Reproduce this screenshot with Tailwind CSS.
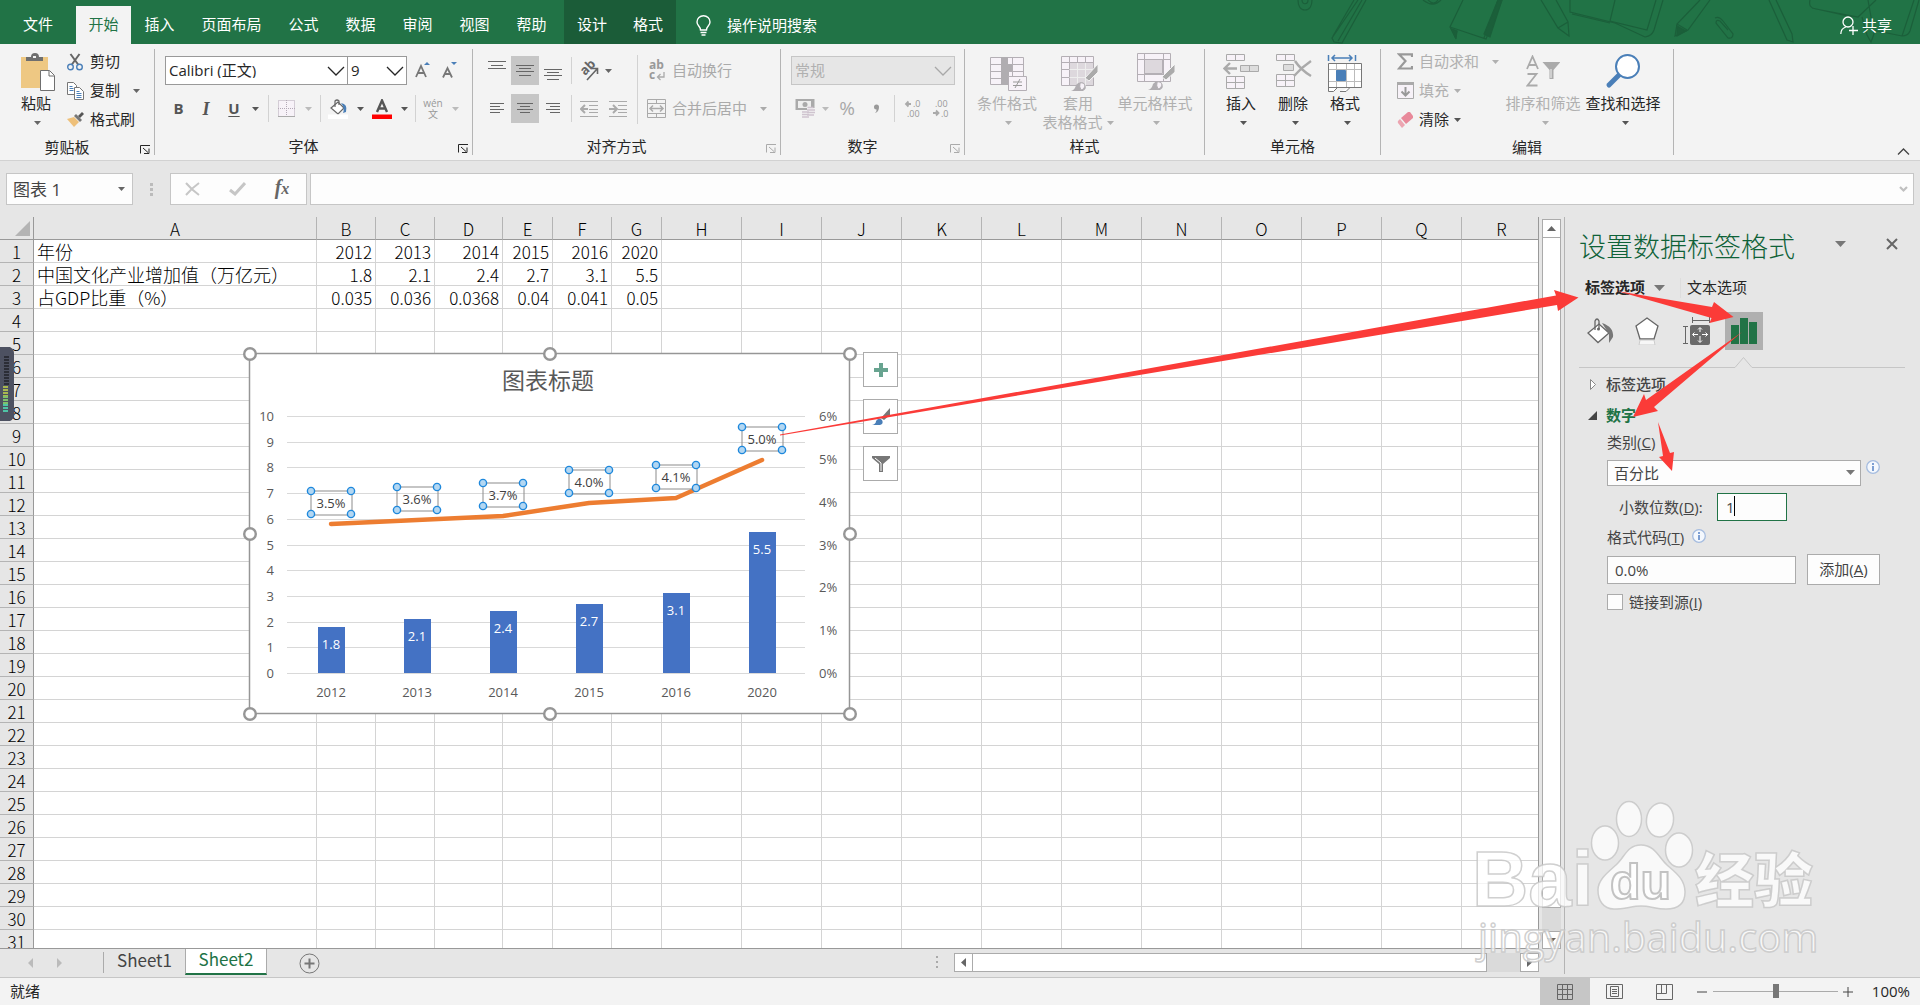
<!DOCTYPE html>
<html lang="zh-CN">
<head>
  <meta charset="UTF-8" />
  <title>Excel - 图表 1</title>
  <script src="https://cdn.jsdelivr.net/npm/@tailwindcss/browser@4"></script>
</head>
<body class="h-screen flex flex-col overflow-hidden relative bg-[#e6e6e6] text-[#262626] text-[15px] leading-none font-['Open_Sans','Noto_Sans_CJK_SC',sans-serif]">

  <!-- shared symbols -->
  <svg class="hidden">
    <symbol id="caret" viewBox="0 0 7 4"><path d="M0 0h7L3.5 4z" fill="currentColor" /></symbol>
    <symbol id="chev" viewBox="0 0 18 10"><path d="M1 1l8 8 8-8" fill="none" stroke="currentColor" stroke-width="1.3" /></symbol>
    <symbol id="launch" viewBox="0 0 10 9"><path d="M.5 8.5V.5H10M3 3l5 4.5M9 3.5V8.5H4" fill="none" stroke="currentColor" /></symbol>
    <symbol id="info" viewBox="0 0 14 14"><circle cx="7" cy="7" r="6.3" fill="#f4f8fd" stroke="#a5bcdf" stroke-width="1.3" /><path d="M6 6h2v5H6zM6 3h2v2H6z" fill="#7d9fd3" /></symbol>
  </svg>

  <!-- tabs -->
  <header class="h-11 shrink-0 bg-[#217346] text-white flex items-stretch relative">
    <svg class="absolute right-0 top-0" width="640" height="44" viewBox="1280 0 640 44" fill="none" stroke="#1b5f3a" stroke-width="1.2">
      <path d="M1298 0c0 5 2 10 7 10s7-5 7-10M1302 0c0 5 6 5 6 0M1358 0l-26 38 2 4 8 1 24-43M1362 0l-24 41M1354 0l-21 36" />
      <path d="M1423 0q10 8 18 0M1428 0q6 6 10 0M1463 0l-13 27 36 12 16-39M1450 27l5 10 2-6M1484 38l14-38M1541 0l17 28 11 8-1-14-12-22M1558 28l10-6" />
      <path d="M1570 0v12l45 11 30 14q7-1 9-7l9-30M1572 14l38 9M1615 0l-5 21 37 9 9-30M1700 0l-23 24-2 12 13-6 22-30M1677 24l10 6M1715 18q4-2 8 3l10 13q0 5-5 4l-12-15q0-4 4-2l8 9M1769 0l18 40 6 2-1-8-16-34" />
      <path d="M1810 0q-2 8 6 9l42 8 18-17M1812 8l40 9M1862 17l5 18 4 7 3-8-6-34M1872 30l30 6q6 0 8-5l9-31M1902 36l12-36" />
      <path d="M1490 37l-6-3 14-34h4zM1452 29l5 2-1 8zM1677 26l9 5-9 5z" fill="#1b5f3a" />
    </svg>
    <nav class="flex items-end relative">
      <button class="w-[76px] h-[38px] pb-[2px]">文件</button>
      <button class="w-[55px] h-[38px] pb-[2px] bg-[#f3f3f3] text-[#217346]">开始</button>
      <button class="w-[57px] h-[38px] pb-[2px]">插入</button>
      <button class="w-[87px] h-[38px] pb-[2px]">页面布局</button>
      <button class="w-[57px] h-[38px] pb-[2px]">公式</button>
      <button class="w-[57px] h-[38px] pb-[2px]">数据</button>
      <button class="w-[57px] h-[38px] pb-[2px]">审阅</button>
      <button class="w-[57px] h-[38px] pb-[2px]">视图</button>
      <button class="w-[57px] h-[38px] pb-[2px]">帮助</button>
      <div class="h-11 ml-1 bg-[#1b5c38] flex items-end">
        <button class="w-14 h-[38px] pb-[2px]">设计</button>
        <button class="w-14 h-[38px] pb-[2px]">格式</button>
      </div>
      <button class="h-[38px] ml-5 flex items-center gap-4">
        <svg width="15" height="21" viewBox="0 0 15 21" fill="none" stroke="#fff" stroke-width="1.4"><path d="M4.5 15c0-4-3.500-4-3.500-8a6.500 6.300 0 0 1 13 0c0 4-3.500 4-3.500 8zM4.500 17.500h6M5.500 20h4" /></svg>
        操作说明搜索
      </button>
    </nav>
    <button class="relative ml-auto mr-[28px] pt-[6px] flex items-center gap-[4px]">
      <svg width="18" height="19" viewBox="0 0 18 19" fill="none" stroke="#fff" stroke-width="1.3"><circle cx="8" cy="6" r="5" /><path d="M.8 18c0-4 2-6 5-7M13 10v9M9 14.500h9" /></svg>
      共享
    </button>
  </header>

  <!-- ribbon -->
  <section class="h-[117px] shrink-0 bg-[#f3f3f3] border-b border-[#d2d2d2] flex relative">
    <!-- clipboard -->
    <div class="w-[154px] pt-[3px] flex flex-col">
      <div class="h-[87px] flex">
        <button class="w-[52px] ml-[10px] flex flex-col items-center">
          <span class="h-[47px] pt-[6px] pl-1"><svg width="34" height="38" viewBox="0 0 34 38"><path d="M0 4h27v31H0z" fill="#eec883" /><path d="M5 8V4h5q0-4 4-4t4 4h4v4z" fill="#6f6f6f" /><path d="M12 3h3v2h-3z" fill="#f3f3f3" /><path d="M19.500 17.500h9l5 5v15h-14z" fill="#fff" stroke="#6f6f6f" /><path d="M28 18v5h5" fill="none" stroke="#6f6f6f" /></svg></span>
          <span class="h-[19px] leading-[18px]">粘贴</span>
          <span class="h-[19px] pt-[8px] pl-[3px] text-[#666]"><svg width="7" height="4"><use href="#caret" /></svg></span>
        </button>
        <div class="ml-[5px] flex flex-col">
          <button class="h-[29px] flex items-center gap-[7px]"><svg width="16" height="18" viewBox="0 0 16 18" fill="none"><path d="M3.500 1l8 11M12.500 1l-8 11" stroke="#666" stroke-width="2" /><circle cx="3.500" cy="14" r="2.800" stroke="#4a7fb8" stroke-width="1.400" /><circle cx="12.500" cy="14" r="2.800" stroke="#4a7fb8" stroke-width="1.400" /></svg>剪切</button>
          <button class="h-[29px] flex items-center gap-[7px]"><svg width="17" height="18" viewBox="0 0 17 18" fill="#fff" stroke="#777"><path d="M.5.500h6l3 3v9h-9z" /><path d="M7.500 5.500h5l4 4v8h-9z" /><path d="M2.500 4.500h3M2.500 6.500h4M2.500 8.500h4M9.500 9.500h3M9.500 11.500h5M9.500 13.500h5M9.500 15.500h5" stroke="#4a7fb8" /></svg><span class="-ml-px">复制</span><svg class="ml-[6px] text-[#666]" width="7" height="4"><use href="#caret" /></svg></button>
          <button class="h-[29px] flex items-center gap-[6px]"><svg width="17" height="15" viewBox="0 0 17 15"><path d="M0 7l7-2 5 5-5 5z" fill="#eec07a" /><path d="M7 4l2-2 6 6-2 2z" fill="#777" /><path d="M11 4l4-4 2 2-4 4z" fill="#555" /></svg>格式刷</button>
        </div>
      </div>
      <div class="h-[28px] flex items-center"><span class="flex-1 text-center">剪贴板</span><button class="w-5 pl-[6px]" aria-label="剪贴板选项"><svg class="mt-1" width="10" height="9"><use href="#launch" /></svg></button></div>
    </div>
    <div class="w-px my-[5px] bg-[#b4b4b4]"></div>

    <!-- font -->
    <div class="w-[317px] pt-[3px] flex flex-col">
      <div class="h-[87px] pl-[10px] flex flex-col justify-center text-[#555]">
        <div class="h-[38px] flex items-center">
          <div class="relative w-[183px] text-[#262626]">
            <select aria-label="字体" class="appearance-none w-full h-[29px] bg-white border border-[#999] px-[3px]"><option>Calibri (正文)</option></select>
            <svg class="absolute right-[3px] top-[10px] pointer-events-none" width="18" height="10"><use href="#chev" /></svg>
          </div>
          <div class="relative w-[60px] -ml-px text-[#262626]">
            <select aria-label="字号" class="appearance-none w-full h-[29px] bg-white border border-[#999] px-[3px]"><option>9</option></select>
            <svg class="absolute right-[3px] top-[10px] pointer-events-none" width="18" height="10"><use href="#chev" /></svg>
          </div>
          <button class="ml-[8px] w-[16px]" aria-label="增大字号"><svg width="16" height="17" viewBox="0 0 16 17"><path d="M1 15L6 4l5 11M3 11h6" fill="none" stroke="#777" stroke-width="1.800" /><path d="M9 3l3-3 3 3z" fill="#4a7fb8" /></svg></button>
          <button class="ml-[11px] w-[16px]" aria-label="减小字号"><svg width="16" height="17" viewBox="0 0 16 17"><path d="M1 15.500L5.500 6l4.500 9.500M3 12h5" fill="none" stroke="#777" stroke-width="1.800" /><path d="M9 0l3 3 3-3z" fill="#4a7fb8" /></svg></button>
        </div>
        <div class="h-[38px] flex items-center">
          <button class="w-[27px] font-bold">B</button>
          <button class="w-[28px] font-bold italic font-['Liberation_Serif',serif] text-lg leading-none">I</button>
          <button class="w-[28px] font-bold underline underline-offset-2">U</button>
          <button class="w-[14px]" aria-label="下划线"><svg class="mx-auto" width="7" height="4"><use href="#caret" /></svg></button>
          <div class="w-px h-[27px] ml-[6px] bg-[#d2d2d2]"></div>
          <button class="w-[34px]" aria-label="边框"><svg class="mx-auto" width="17" height="17" viewBox="0 0 17 17" fill="#f7f2f8" stroke="#b3a9b6"><path d="M.5.500h16v16H.5zM8.500 0v17M0 8.500h17" stroke-dasharray="1 1" /><path d="M0 16.500h17" stroke="#aaa" /></svg></button>
          <button class="w-[10px] text-[#bbb]" aria-label="边框选项"><svg class="mx-auto" width="7" height="4"><use href="#caret" /></svg></button>
          <div class="w-px h-[27px] ml-[7px] bg-[#d2d2d2]"></div>
          <button class="w-[34px]" aria-label="填充颜色"><svg class="mx-auto" width="20" height="20" viewBox="0 0 20 20"><path d="M3 9l7-6 6 6-6 6z" fill="#fff" stroke="#666" stroke-width="1.200" /><path d="M7 8V2q2-2 4 0v4" fill="none" stroke="#666" stroke-width="1.200" /><path d="M13 4q7 1 5 9l-3 1q2-5-2-10z" fill="#4a7fb8" /><path d="M0 15.500h20V20H0z" fill="#fff" /></svg></button>
          <button class="w-[10px]" aria-label="填充选项"><svg class="mx-auto" width="7" height="4"><use href="#caret" /></svg></button>
          <button class="w-[34px]" aria-label="字体颜色"><svg class="mx-auto" width="20" height="20" viewBox="0 0 20 20"><path d="M5 13L10 1.500l5 11.500M6.500 9.500h7" fill="none" stroke="#555" stroke-width="2.400" /><path d="M0 15.500h20V20H0z" fill="#f00" /></svg></button>
          <button class="w-[10px]" aria-label="字体颜色选项"><svg class="mx-auto" width="7" height="4"><use href="#caret" /></svg></button>
          <div class="w-px h-[27px] ml-[6px] bg-[#d2d2d2]"></div>
          <button class="w-[34px] flex flex-col items-center text-[#999] text-[10px]"><span class="h-[10px] leading-[8px]">wén</span><span>文</span></button>
          <button class="w-[10px] text-[#bbb]" aria-label="拼音选项"><svg class="mx-auto" width="7" height="4"><use href="#caret" /></svg></button>
        </div>
      </div>
      <div class="h-[28px] flex items-center"><span class="flex-1 text-center">字体</span><button class="w-5 pl-[6px]" aria-label="字体选项"><svg class="mt-1" width="10" height="9"><use href="#launch" /></svg></button></div>
    </div>
    <div class="w-px my-[5px] bg-[#b4b4b4]"></div>

    <!-- alignment -->
    <div class="w-[307px] pt-[3px] flex flex-col">
      <div class="h-[87px] pl-[10px] flex items-center text-[#666]">
        <div class="w-[154px]">
          <div class="h-[38px] flex items-center">
            <button class="w-[28px] h-[29px]" aria-label="顶端对齐"><svg class="mx-auto" width="18" height="20" viewBox="0 0 18 20" stroke="#666"><path d="M0 .5h18M3 4.500h12M0 7.500h18" /></svg></button>
            <button class="w-[28px] h-[29px] bg-[#c6c6c6]" aria-label="垂直居中"><svg class="mx-auto" width="18" height="20" viewBox="0 0 18 20" stroke="#666"><path d="M0 4.500h18M3 7.500h12M0 10.500h18M3 14.500h12" /></svg></button>
            <button class="w-[28px] h-[29px]" aria-label="底端对齐"><svg class="mx-auto" width="18" height="20" viewBox="0 0 18 20" stroke="#666"><path d="M0 8.500h18M3 11.500h12M0 14.500h18M3 18.500h12" /></svg></button>
            <div class="w-px h-[27px] ml-1 mr-[3px] bg-[#d2d2d2]"></div>
            <button class="w-[28px]" aria-label="方向"><svg class="mx-auto overflow-visible" width="20" height="20" viewBox="0 0 20 20"><text x="0" y="0" transform="translate(6 15) rotate(-45)" font-size="13" font-weight="bold" fill="#666">ab</text><path d="M8 19L18 8M13 7.500h5.500V13" fill="none" stroke="#666" stroke-width="1.600" /></svg></button>
            <button class="w-[10px]" aria-label="方向选项"><svg class="mx-auto" width="7" height="4"><use href="#caret" /></svg></button>
          </div>
          <div class="h-[38px] flex items-center">
            <button class="w-[28px] h-[29px]" aria-label="左对齐"><svg class="mx-auto" width="14" height="11" stroke="#666"><path d="M0 .5h14M0 3.500h10M0 6.500h14M0 9.500h10" /></svg></button>
            <button class="w-[28px] h-[29px] bg-[#c6c6c6]" aria-label="居中"><svg class="mx-auto" width="16" height="11" stroke="#666"><path d="M0 .5h16M3 3.500h10M0 6.500h16M3 9.500h10" /></svg></button>
            <button class="w-[28px] h-[29px]" aria-label="右对齐"><svg class="mx-auto" width="14" height="11" stroke="#666"><path d="M0 .5h14M4 3.500h10M0 6.500h14M4 9.500h10" /></svg></button>
            <div class="w-px h-[27px] ml-1 mr-[3px] bg-[#d2d2d2]"></div>
            <button class="w-[28px]" aria-label="减少缩进"><svg class="mx-auto" width="18" height="16" viewBox="0 0 18 16" fill="none" stroke="#aaa"><path d="M0 .5h18M9 4.500h9M9 8.500h9M9 11.500h9M0 15.500h18" /><path d="M8 8H1M5 4L1 8l4 4" stroke-width="2" /></svg></button>
            <button class="w-[29px]" aria-label="增加缩进"><svg class="mx-auto" width="18" height="16" viewBox="0 0 18 16" fill="none" stroke="#aaa"><path d="M0 .5h18M9 4.500h9M9 8.500h9M9 11.500h9M0 15.500h18" /><path d="M0 8h7M4 4l4 4-4 4" stroke-width="2" /></svg></button>
          </div>
        </div>
        <div class="w-px h-[69px] bg-[#d2d2d2]"></div>
        <div class="ml-[9px] text-[#aaa]">
          <button class="h-[38px] flex items-center gap-[6px]"><svg class="overflow-visible" width="19" height="20" viewBox="0 0 19 20" fill="#999" font-size="12" font-weight="bold"><text x="2" y="8">ab</text><text x="2" y="18">c</text><path d="M17 11v5h-6M13.500 13l-3 3 3 3" fill="none" stroke="#aaa" stroke-width="1.300" /></svg>自动换行</button>
          <button class="h-[38px] flex items-center gap-[6px]"><svg width="19" height="19" viewBox="0 0 19 19" fill="none" stroke="#aaa"><path d="M.5.500h18v18H.5zM.5 4.500h18M.5 14.500h18M9.500.500v4M9.500 14.500v4" /><path d="M3 9.500h13M6 6.500l-3 3 3 3M13 6.500l3 3-3 3" stroke-width="1.500" /></svg>合并后居中<svg class="ml-[7px]" width="7" height="4"><use href="#caret" /></svg></button>
        </div>
      </div>
      <div class="h-[28px] flex items-center"><span class="flex-1 text-center">对齐方式</span><button class="w-5 pl-[6px] text-[#aaa]" aria-label="对齐选项"><svg class="mt-1" width="10" height="9"><use href="#launch" /></svg></button></div>
    </div>
    <div class="w-px my-[5px] bg-[#b4b4b4]"></div>

    <!-- number -->
    <div class="w-[183px] pt-[3px] flex flex-col">
      <div class="h-[87px] flex flex-col justify-center text-[#a8a8a8]">
        <div class="h-[38px] pl-[10px] flex items-center">
          <div class="relative w-[164px]">
            <select aria-label="数字格式" disabled class="appearance-none w-full h-[29px] bg-[#e6e6e6] border border-[#c6c6c6] px-[3px] text-[#b0b0b0] opacity-100"><option>常规</option></select>
            <svg class="absolute right-[3px] top-[10px] pointer-events-none" width="18" height="10"><use href="#chev" /></svg>
          </div>
        </div>
        <div class="h-[38px] pl-[9px] flex items-center">
          <button class="w-[30px]" aria-label="会计格式"><svg class="mx-auto" width="20" height="19" viewBox="0 0 20 19"><path d="M.5 0h19v11H.5z" fill="#aaa" /><path d="M3 2h13v7H3z" fill="#eee" /><circle cx="10" cy="5.500" r="2.500" fill="#aaa" /><path d="M12 9h8v8h-8zM7 13h7v6H7z" fill="#f3f3f3" /><path d="M12.500 8.500h6M12 11h8M12 13.500h8M12 16h7M7 13h7M7 15.500h7M7 18h7" stroke="#cfc4cf" stroke-width="1.300" /></svg></button>
          <button class="w-[10px] text-[#bbb]" aria-label="会计格式选项"><svg class="mx-auto" width="7" height="4"><use href="#caret" /></svg></button>
          <button class="w-[34px] text-[19px]">%</button>
          <button class="w-[24px]" aria-label="千位分隔"><svg class="mx-auto" width="7" height="10"><path d="M1 3a2.500 2.500 0 1 1 5 0q0 5-4 6q2-2 1.500-3.500Q1 5.500 1 3z" fill="#999" /></svg></button>
          <div class="w-px h-[27px] ml-[6px] bg-[#d2d2d2]"></div>
          <button class="w-[36px]" aria-label="增加小数位"><svg class="mx-auto overflow-visible" width="18" height="18" viewBox="0 0 18 18" fill="#999" font-size="9"><text x="9" y="7">.0</text><text x="3" y="17">.00</text><path d="M7 4H2M4.500 1.500L2 4l2.500 2.500" fill="none" stroke="#aaa" stroke-width="1.800" /></svg></button>
          <button class="w-[20px]" aria-label="减少小数位"><svg class="mx-auto overflow-visible" width="18" height="18" viewBox="0 0 18 18" fill="#999" font-size="9"><text x="3" y="7">.00</text><text x="9" y="17">.0</text><path d="M1 13h5M4 10.500L6.500 13 4 15.500" fill="none" stroke="#aaa" stroke-width="1.800" /></svg></button>
        </div>
      </div>
      <div class="h-[28px] flex items-center"><span class="flex-1 text-center">数字</span><button class="w-5 pl-[6px] text-[#aaa]" aria-label="数字选项"><svg class="mt-1" width="10" height="9"><use href="#launch" /></svg></button></div>
    </div>
    <div class="w-px my-[5px] bg-[#b4b4b4]"></div>

    <!-- styles -->
    <div class="w-[239px] pt-[3px] flex flex-col">
      <div class="h-[87px] pl-2 flex text-[#b0b0b0] whitespace-nowrap">
        <button class="w-[68px] flex flex-col items-center">
          <span class="h-[47px] pt-[10px] pl-[2px]"><svg width="37" height="36" viewBox="0 0 37 36"><path d="M.5.500h33v27H.5zM0 7.500h34M0 14.500h34M0 21.500h34M11.500 0v28M22.500 0v28" fill="#f7f2f8" stroke="#b4afb5" /><path d="M11 0h7v7h-7zM11 7h11v7H11zM11 14h8v7h-8zM11 21h7v7h-7z" fill="#b0adb1" /><path d="M18.500 19.500h18v14h-18z" fill="#f7f2f8" stroke="#b4afb5" /><path d="M23 25h9M23 28.500h9M30 22l-5 9" stroke="#999" fill="none" /></svg></span>
          <span class="h-[19px] leading-[18px]">条件格式</span>
          <span class="h-[19px] pt-[8px] pl-[3px]"><svg width="7" height="4"><use href="#caret" /></svg></span>
        </button>
        <button class="w-[74px] flex flex-col items-center">
          <span class="h-[47px] pt-[9px] pl-[3px]"><svg width="38" height="37" viewBox="0 0 38 37"><path d="M.5.500h32v29H.5zM0 6.500h33M0 13.500h33M0 21.500h33M8.500 0v30M16.500 0v30M24.500 0v30" fill="#f7f2f8" stroke="#b4afb5" /><path d="M8.500 6.500h24v23h-24z" fill="#ddd8dd" stroke="#b4afb5" /><path d="M8.500 13.500h24M8.500 21.500h24M16.500 7v23M24.500 7v23" stroke="#eee" /><path d="M37 8v8l-9 9-4-3z" fill="#aaa" stroke="#f3f3f3" /><path d="M10 35q4-1 5-6 3-4 8-2 4 5-1 8z" fill="#b0adb1" /><path d="M19 27q4-1 5 3-1 4-4 4-2-3-1-7z" fill="#f7f2f8" stroke="#b0adb1" /></svg></span>
          <span class="h-[19px] leading-[18px]">套用</span>
          <span class="h-[19px] leading-[19px] flex items-center gap-1">表格格式<svg width="7" height="4"><use href="#caret" /></svg></span>
        </button>
        <button class="w-[80px] flex flex-col items-center">
          <span class="h-[47px] pt-[6px] pl-[2px]"><svg width="38" height="39" viewBox="0 0 38 39"><path d="M.5.500h33v28H.5zM0 6.500h34M0 21.500h34M7.500 0v28M26.500 0v28" fill="#f7f2f8" stroke="#b4afb5" /><path d="M7.500 6.500h18v14h-18z" fill="#ddd8dd" stroke="#b4afb5" /><path d="M38 11v8l-9 8-4-3z" fill="#aaa" stroke="#f3f3f3" /><path d="M11 37q4-1 5-6 3-4 8-2 4 5-1 8z" fill="#b0adb1" /><path d="M20 29q4-1 5 3-1 4-4 4-2-3-1-7z" fill="#f7f2f8" stroke="#b0adb1" /></svg></span>
          <span class="h-[19px] leading-[18px]">单元格样式</span>
          <span class="h-[19px] pt-[8px] pl-[3px]"><svg width="7" height="4"><use href="#caret" /></svg></span>
        </button>
      </div>
      <div class="h-[28px] flex items-center justify-center">样式</div>
    </div>
    <div class="w-px my-[5px] bg-[#b4b4b4]"></div>

    <!-- cells -->
    <div class="w-[175px] pt-[3px] flex flex-col">
      <div class="h-[87px] pl-[10px] flex">
        <button class="w-[52px] flex flex-col items-center">
          <span class="h-[47px] pt-[7px]"><svg width="36" height="36" viewBox="0 0 36 36" fill="#f7f2f8" stroke="#aaa"><path d="M3.500.500h18v6h-18zM12.500.500v6M3.500 22.500h18v12h-18zM12.500 22.500v12M3.500 28.500h18" /><path d="M17.500 11.500h18v6h-18zM26.500 11.500v6" fill="#ddd" /><path d="M14 14.500H2M7 9l-5.500 5.500L7 20" fill="none" stroke-width="2.400" /></svg></span>
          <span class="h-[19px] leading-[18px]">插入</span>
          <span class="h-[19px] pt-[8px] pl-[4px] text-[#555]"><svg width="7" height="4"><use href="#caret" /></svg></span>
        </button>
        <button class="w-[52px] flex flex-col items-center">
          <span class="h-[47px] pt-[7px] pl-[2px]"><svg width="36" height="36" viewBox="0 0 36 36" fill="#f7f2f8" stroke="#aaa"><path d="M.5.500h18v6H.5zM9.500.500v6M.5 20.500h18v12H.5zM9.500 20.500v12M.5 26.500h18" /><path d="M7.500 10.500h10v6h-10z" fill="#ddd" /><path d="M19 7q6 9 16 15M35 7q-9 6-17 15" fill="none" stroke-width="2.400" /></svg></span>
          <span class="h-[19px] leading-[18px]">删除</span>
          <span class="h-[19px] pt-[8px] pl-[4px] text-[#555]"><svg width="7" height="4"><use href="#caret" /></svg></span>
        </button>
        <button class="w-[52px] flex flex-col items-center">
          <span class="h-[47px] pt-[8px]"><svg class="overflow-visible" width="34" height="38" viewBox="0 0 34 38" fill="#fff" stroke="#777"><path d="M.5 8.500h33v24H.5z" /><path d="M8.500 9v24M18.500 9v24M26.500 9v24M1 14.500h32M1 26.500h32" stroke="#bbb" /><path d="M8.500 15.500h9v10h-9z" fill="#4a7fb8" stroke="#4a7fb8" /><path d="M.5 32v4.500h5l4-4M12 36.500h6l4-4M.5 32.500h33" /><path d="M.5 0v6M27.500 0v6M4 3h20M7 0L4 3l3 3M21 0l3 3-3 3" fill="none" stroke="#4a7fb8" stroke-width="1.500" /></svg></span>
          <span class="h-[19px] leading-[18px]">格式</span>
          <span class="h-[19px] pt-[8px] pl-[4px] text-[#555]"><svg width="7" height="4"><use href="#caret" /></svg></span>
        </button>
      </div>
      <div class="h-[28px] flex items-center justify-center">单元格</div>
    </div>
    <div class="w-px my-[5px] bg-[#b4b4b4]"></div>

    <!-- editing -->
    <div class="w-[292px] pt-[3px] flex flex-col">
      <div class="h-[87px] pl-4 flex">
        <div class="w-[106px] flex flex-col">
          <button class="h-[29px] flex items-center gap-[6px] text-[#b0b0b0]"><svg width="16" height="17" viewBox="0 0 16 17"><path d="M15 4V1.300H2L8.500 8 2 15.500h13V13" fill="none" stroke="#999" stroke-width="2.200" /></svg>自动求和<svg class="ml-[7px]" width="7" height="4"><use href="#caret" /></svg></button>
          <button class="h-[29px] flex items-center gap-[5px] text-[#b0b0b0]"><svg width="17" height="18" viewBox="0 0 17 18"><path d="M.5.500h16v16H.5z" fill="#f7f2f8" stroke="#aaa" /><path d="M0 0h17v3H0z" fill="#aaa" /><path d="M8.500 5v8M4.500 9.500l4 4 4-4" fill="none" stroke="#999" stroke-width="2" /></svg>填充<svg width="7" height="4"><use href="#caret" /></svg></button>
          <button class="h-[29px] flex items-center gap-[5px]"><svg width="17" height="16" viewBox="0 0 17 16"><path d="M4 6l7-6h2l3 4v2l-7 6z" fill="#e8899a" /><path d="M3 7l5 6-3 3-4-5q-.5-1 0-2z" fill="#eca5b1" /></svg>清除<svg class="text-[#555]" width="7" height="4"><use href="#caret" /></svg></button>
        </div>
        <button class="w-[80px] flex flex-col items-center text-[#b0b0b0]">
          <span class="h-[47px] pt-[8px]"><svg width="34" height="32" viewBox="0 0 34 32" fill="none" stroke="#aaa" stroke-width="1.800"><path d="M1 14L6.500 1.500 12 14M3 10h7M1.500 19h9L1.500 30.500h10" /><path d="M16.500 7h18l-7 8v9h-4v-9z" fill="#aaa" stroke="none" /><path d="M25 14v9" stroke="#f3f3f3" stroke-width="1" /></svg></span>
          <span class="h-[19px] leading-[18px]">排序和筛选</span>
          <span class="h-[19px] pt-[8px] pl-[4px]"><svg width="7" height="4"><use href="#caret" /></svg></span>
        </button>
        <button class="w-[80px] flex flex-col items-center">
          <span class="h-[47px] pt-[7px]"><svg width="36" height="36" viewBox="0 0 36 36"><path d="M15 20L4 31" stroke="#4a7fb8" stroke-width="5" stroke-linecap="round" /><circle cx="22.500" cy="12.500" r="11.500" fill="#fff" stroke="#4a7fb8" stroke-width="2" /></svg></span>
          <span class="h-[19px] leading-[18px]">查找和选择</span>
          <span class="h-[19px] pt-[8px] pl-[4px] text-[#555]"><svg width="7" height="4"><use href="#caret" /></svg></span>
        </button>
      </div>
      <div class="h-[28px] flex items-center justify-center">编辑</div>
    </div>
    <div class="w-px my-[5px] bg-[#b4b4b4]"></div>
    <button class="ml-auto self-end mr-[10px] mb-[5px]" aria-label="折叠功能区"><svg width="13" height="7"><path d="M1 6.500l5.500-5.500 5.500 5.500" fill="none" stroke="#444" stroke-width="1.300" /></svg></button>
  </section>

  <!-- formula bar -->
  <section class="shrink-0 py-3 px-[6px] flex items-stretch text-[#444]">
    <div class="relative w-[127px]">
      <select aria-label="名称框" class="appearance-none w-full h-8 bg-[#fdfdfd] border border-[#c6c6c6] px-[6px] text-[17px]"><option>图表 1</option></select>
      <svg class="absolute right-[8px] top-[14px] text-[#666] pointer-events-none" width="7" height="4"><use href="#caret" /></svg>
    </div>
    <div class="w-[37px] flex flex-col items-center justify-center gap-[2px]">
      <i class="size-[3px] bg-[#bbb]"></i><i class="size-[3px] bg-[#bbb]"></i><i class="size-[3px] bg-[#bbb]"></i>
    </div>
    <div class="w-[137px] h-8 bg-[#fdfdfd] border border-[#c6c6c6] flex items-center">
      <button class="w-[43px]" aria-label="取消"><svg class="mx-auto" width="15" height="14"><path d="M1 1q6 7 13 12M14 1q-7 5-13 12" fill="none" stroke="#c6c6c6" stroke-width="2" /></svg></button>
      <button class="w-[46px]" aria-label="输入"><svg class="mx-auto" width="17" height="14"><path d="M1 8l5 4L16 1" fill="none" stroke="#c6c6c6" stroke-width="3" /></svg></button>
      <button class="w-[44px] italic font-['Liberation_Serif',serif] font-bold text-[#666] text-xl leading-none" aria-label="插入函数">f<span class="text-base">x</span></button>
    </div>
    <div class="flex-1 ml-[3px] relative">
      <input aria-label="编辑栏" class="w-full h-8 bg-[#fdfdfd] border border-[#c6c6c6] px-2" />
      <svg class="absolute right-[6px] top-[13px]" width="9" height="7"><path d="M1 1l3.500 3.500L8 1" fill="none" stroke="#c0c0c0" stroke-width="2.200" /></svg>
    </div>
  </section>

  <main class="flex-1 min-h-0 flex">
    <div class="flex-1 min-w-0 flex flex-col">
      <div class="flex-1 min-h-0 flex">
        <!-- sheet -->
        <div class="flex-1 min-w-0 overflow-hidden relative border-r border-b border-[#999]">
          <table class="table-fixed border-separate border-spacing-0 w-[1542px] bg-white font-['Noto_Sans_CJK_SC',sans-serif] font-light text-[17px] leading-none text-black">
            <colgroup>
              <col class="w-[34px]"><col class="w-[283px]"><col class="w-[59px]"><col class="w-[59px]"><col class="w-[68px]"><col class="w-[50px]"><col class="w-[59px]"><col class="w-[50px]">
              <col class="w-[80px]"><col class="w-[80px]"><col class="w-[80px]"><col class="w-[80px]"><col class="w-[80px]"><col class="w-[80px]"><col class="w-[80px]"><col class="w-[80px]"><col class="w-[80px]"><col class="w-[80px]"><col class="w-[80px]">
            </colgroup>
            <thead id="cols"></thead>
            <tbody id="rows"></tbody>
          </table>

          <!-- chart object -->
          <svg id="chart" class="absolute left-[240px] top-[127px] font-['Open_Sans','Noto_Sans_CJK_SC',sans-serif]" width="620" height="380" viewBox="240 344 620 380" font-size="13" fill="#595959"></svg>
          <div class="absolute left-[863px] top-[135px] flex flex-col gap-3">
            <button class="size-[35px] bg-white border border-[#ababab] grid place-items-center" aria-label="图表元素"><svg width="14" height="14"><path d="M5 0h4v5h5v4H9v5H5V9H0V5h5z" fill="#68a490" /></svg></button>
            <button class="size-[35px] bg-white border border-[#ababab] grid place-items-center" aria-label="图表样式"><svg width="18" height="18"><path d="M18 0v7l-6 5-3-2z" fill="#777" /><path d="M0 17q4-1 4-4 3-4 6-1 2 4-2 5z" fill="#4a7fb8" /></svg></button>
            <button class="size-[35px] bg-white border border-[#ababab] grid place-items-center" aria-label="图表筛选器"><svg width="18" height="16"><path d="M0 0h18v2l-7 6v8H7V8L0 2z" fill="#777" /><path d="M3 2l6 5v8" fill="none" stroke="#fff" /></svg></button>
          </div>
          <!-- volume meter -->
          <svg class="absolute left-0 top-[130px]" width="15" height="74"><path d="M0 0h10q4 2 4 6v62q0 4-4 6H0z" fill="#4d5161" /><path d="M6.500 9v30" stroke="#2b2d36" stroke-width="5" stroke-dasharray="2 1" /><path d="M5.500 39v10" stroke="#a9b84f" stroke-width="5" stroke-dasharray="2 1" /><path d="M5.500 49v8" stroke="#7fc06b" stroke-width="5" stroke-dasharray="2 1" /><path d="M5.500 57v9" stroke="#4fc3a6" stroke-width="5" stroke-dasharray="2 1" /></svg>
        </div>
        <!-- vertical scroll -->
        <div class="w-[19px] ml-[3px] mr-[3px] mt-[2px] flex flex-col bg-[#dadada]">
          <button class="h-[19px] bg-white border border-[#ababab] grid place-items-center text-[#666]" aria-label="向上"><svg width="9" height="5"><path d="M0 5h9L4.500 0z" fill="currentColor" /></svg></button>
          <div class="flex-1 bg-white border border-t-0 border-[#ababab]"></div>
          <div class="h-[23px]"></div>
          <button class="h-[18px] bg-white border border-[#ababab] grid place-items-center text-[#666]" aria-label="向下"><svg width="9" height="5"><path d="M0 0h9L4.500 5z" fill="currentColor" /></svg></button>
        </div>
      </div>
      <!-- sheet tabs -->
      <div class="h-[28px] shrink-0 flex items-start font-['Noto_Sans_CJK_SC','Open_Sans',sans-serif]">
        <div class="w-[103px] h-[28px] flex items-center pl-[28px] gap-[24px]">
          <svg width="5" height="10"><path d="M5 0v10L0 5z" fill="#bbb" /></svg>
          <svg width="5" height="10"><path d="M0 0v10l5-5z" fill="#bbb" /></svg>
        </div>
        <div class="w-px h-[21px] mt-[3px] bg-[#ababab]"></div>
        <button class="w-[81px] h-[26px] pb-[6px] text-[17px] text-[#444]">Sheet1</button>
        <button class="w-[82px] h-[26px] pb-[5px] text-[17px] bg-white text-[#217346] border-x border-x-[#ababab] border-b-2 border-b-[#217346]">Sheet2</button>
        <button class="ml-[32px] mt-[4px]" aria-label="新工作表"><svg width="21" height="21" fill="none" stroke="#777"><circle cx="10.500" cy="10.500" r="9.500" /><path d="M10.500 5.500v10M5.500 10.500h10" stroke-width="2" /></svg></button>
        <div class="ml-auto mr-[16px] mt-[7px] flex flex-col gap-[3px]"><i class="size-[2px] bg-[#aaa]"></i><i class="size-[2px] bg-[#aaa]"></i><i class="size-[2px] bg-[#aaa]"></i></div>
        <div class="w-[585px] h-[19px] mr-[25px] mt-[4px] flex bg-[#dadada]">
          <button class="w-[19px] bg-white border border-[#ababab] grid place-items-center text-[#666]" aria-label="向左"><svg width="5" height="9"><path d="M5 0v9L0 4.500z" fill="currentColor" /></svg></button>
          <div class="flex-1 bg-white border border-l-0 border-[#ababab]"></div>
          <div class="w-[33px]"></div>
          <button class="w-[19px] bg-white border border-[#ababab] grid place-items-center text-[#666]" aria-label="向右"><svg width="5" height="9"><path d="M0 0v9l5-4.500z" fill="currentColor" /></svg></button>
        </div>
      </div>
    </div>

    <!-- format pane -->
    <aside class="w-[356px] shrink-0 mb-[3px] border-l border-[#b4b4b4] text-[#444]">
      <div class="h-[56px] pt-[2px] pl-[14px] pr-[22px] flex items-center">
        <h2 class="flex-1 text-[27px] font-light text-[#0f6238]">设置数据标签格式</h2>
        <button aria-label="任务窗格选项"><svg class="mb-1" width="11" height="6"><path d="M0 0h11L5.500 6z" fill="#777" /></svg></button>
        <button class="ml-[40px]" aria-label="关闭"><svg class="mb-1" width="12" height="12"><path d="M1 1l10 10M11 1L1 11" stroke="#666" stroke-width="2" /></svg></button>
      </div>
      <div class="h-[30px] pb-px pl-5 flex items-center text-[#262626]">
        <button class="font-bold">标签选项</button>
        <svg class="ml-[9px]" width="11" height="6"><path d="M0 0h11L5.500 6z" fill="#777" /></svg>
        <div class="w-px h-5 ml-[15px] mr-[6px] bg-[#ddd]"></div>
        <button>文本选项</button>
      </div>
      <div class="mt-[9px] pl-[14px] flex">
        <button class="w-[43px] h-[38px]" aria-label="填充与线条"><svg class="mx-auto" width="27" height="26" viewBox="0 0 27 26"><path d="M1 15L12 6l10 9-11 9.500z" fill="#fff" stroke="#666" stroke-width="1.300" /><path d="M8 12V3q2-4 4 0v8" fill="none" stroke="#666" stroke-width="1.300" /><circle cx="11.500" cy="11" r="1.500" fill="#666" /><path d="M15 5q12 4 11 14l-4 6V16z" fill="#777" /></svg></button>
        <button class="w-[49px] h-[38px]" aria-label="效果"><svg class="mx-auto" width="24" height="28" viewBox="0 0 24 28"><path d="M12 1l11 8-4 13H5L1 9z" fill="#fff" stroke="#666" stroke-width="1.300" /><path d="M5 23h14l1 5H4z" fill="#f7f7f7" stroke="#ccc" /></svg></button>
        <button class="w-[54px] h-[38px] pr-1" aria-label="大小与属性"><svg class="mx-auto" width="27" height="28" viewBox="0 0 27 28"><path d="M9 3.500h18M9.500 0v6M26.500 0v6M2.500 9v18M0 9.500h5M0 26.500h5" stroke="#666" fill="none" /><rect x="7" y="8" width="20" height="20" rx="2" fill="#6a6a6a" /><path d="M17 11v4M17 19v6M10 17.500h5M19 17.500h6M15 12.500l2-2 2 2M15 23.500l2 2 2-2M11.500 15.500l-2 2 2 2M22.500 15.500l2 2-2 2" stroke="#fff" fill="none" /></svg></button>
        <button class="size-[38px] bg-[#b0b0b0]" aria-label="标签选项"><svg class="mx-auto" width="26" height="26"><path d="M0 7h8v19H0zM9 0h8v26H9zM18 4h8v22h-8z" fill="#217346" /></svg></button>
      </div>
      <div class="h-[22px] pl-[14px] pr-[15px] flex items-end mt-[-4px]">
        <div class="w-[156px] h-px bg-[#c6c6c6]"></div>
        <svg width="17" height="11" fill="none" stroke="#c6c6c6"><path d="M0 10.500L8.500.500l8.500 10" /></svg>
        <div class="flex-1 h-px bg-[#c6c6c6]"></div>
      </div>
      <button class="mt-px h-[31px] pl-[25px] flex items-center font-medium"><svg class="mr-[10px]" width="6" height="11" fill="#fff" stroke="#888"><path d="M.5.500v10l5-5z" /></svg>标签选项</button>
      <button class="h-[31px] pl-[23px] flex items-center font-bold text-[#217346]"><svg class="mr-[9px]" width="9" height="9"><path d="M9 0v9H0z" fill="#444" /></svg>数字</button>
      <div class="pl-[42px]">
        <label for="category" class="h-[29px] leading-[23px] block">类别(<u>C</u>)</label>
        <div class="flex">
          <div class="relative w-[254px]">
            <select id="category" class="appearance-none w-full h-[26px] bg-[#fdfdfd] border border-[#ababab] px-[6px]"><option>百分比</option></select>
            <svg class="absolute right-[6px] top-[10px] pointer-events-none" width="9" height="5"><path d="M0 0h9L4.500 5z" fill="#777" /></svg>
          </div>
          <svg class="ml-[5px]" width="14" height="14"><use href="#info" /></svg>
        </div>
        <div class="mt-[7px] pl-3 flex items-center">
          <label for="decimals" class="w-[98px]">小数位数(<u>D</u>):</label>
          <div class="relative"><input id="decimals" value="1" class="block w-[70px] h-[28px] bg-[#fdfdfd] border border-[#217346] px-2" /><i class="absolute left-[17px] top-[3px] w-px h-5 bg-black"></i></div>
        </div>
        <div class="h-[33px] flex items-center gap-2">
          <label for="code">格式代码(<u>T</u>)</label><svg class="mb-1" width="14" height="14"><use href="#info" /></svg>
        </div>
        <div class="flex items-center gap-[11px]">
          <input id="code" value="0.0%" class="w-[189px] h-[28px] bg-[#fdfdfd] border border-[#ababab] px-[7px]" />
          <button class="w-[73px] h-[31px] bg-[#fdfdfd] border border-[#ababab]">添加(<u>A</u>)</button>
        </div>
        <label class="mt-[9px] flex items-center gap-[6px]"><input type="checkbox" class="appearance-none size-4 bg-[#fdfdfd] border border-[#ababab]" /><span>链接到源(<u>I</u>)</span></label>
      </div>
    </aside>
  </main>

  <!-- status bar -->
  <footer class="h-[28px] shrink-0 bg-[#f3f3f3] border-t border-[#c6c6c6] flex items-center">
    <span class="pl-[10px]">就绪</span>
    <div class="ml-auto h-full flex items-center">
      <button class="w-[50px] h-full bg-[#c6c6c6]" aria-label="普通"><svg class="mx-auto" width="16" height="16" fill="none" stroke="#666"><path d="M.5.500h15v15H.5zM5.500 0v16M10.500 0v16M0 5.500h16M0 10.500h16" /></svg></button>
      <button class="w-[49px] h-full" aria-label="页面布局"><svg class="mx-auto" width="17" height="15" fill="none" stroke="#666"><path d="M.5.500h16v14H.5zM4.500 2.500h8v10h-8zM6 5.500h5M6 7.500h5M6 9.500h5" /></svg></button>
      <button class="w-[51px] h-full" aria-label="分页预览"><svg class="mx-auto" width="17" height="16" fill="none" stroke="#666"><path d="M.5.500h16v15H.5zM.5 9.500h10v-9M5.500.500v9" /></svg></button>
      <button class="w-[16px] ml-[4px]" aria-label="缩小"><svg class="mx-auto" width="10" height="10"><path d="M0 5h10" stroke="#444" stroke-width="1" /></svg></button>
      <input type="range" aria-label="缩放" value="50" class="appearance-none bg-transparent w-[125px] h-4 mx-[3px] [&::-webkit-slider-runnable-track]:h-px [&::-webkit-slider-runnable-track]:bg-[#aaa] [&::-webkit-slider-thumb]:appearance-none [&::-webkit-slider-thumb]:w-[6px] [&::-webkit-slider-thumb]:h-[14px] [&::-webkit-slider-thumb]:-mt-[7px] [&::-webkit-slider-thumb]:bg-[#777]" />
      <button class="w-[14px]" aria-label="放大"><svg class="mx-auto" width="10" height="10"><path d="M0 5h10M5 0v10" stroke="#444" /></svg></button>
      <span class="w-[65px] pr-[10px] text-right">100%</span>
    </div>
  </footer>

  <!-- red annotation arrows -->
  <svg class="absolute left-0 top-0 pointer-events-none" width="1920" height="1005" fill="#fb3b38">
    <path d="M780 434.500L1556 295.500 1554 290l24.500 7.500L1558 311l-1-6L780 435.500z" />
    <path d="M1617 291l95 16 2-5 19.500 15-24 6 2-5z" />
    <path d="M1742 332l-96 68-2-6-11 23 25-6-4-4z" />
    <path d="M1658 422l12 31 4-1-2 19-13-14 4-1z" />
  </svg>

  <!-- watermark -->
  <svg class="absolute right-[98px] bottom-[36px] pointer-events-none" width="352" height="174" viewBox="1470 795 352 174" fill="#fff" fill-opacity=".75" stroke="#c4c4c4" stroke-opacity=".8" stroke-width="1.500">
    <text x="1472" y="906" font-size="78" font-weight="bold" class="font-['Liberation_Sans',sans-serif]">Bai</text>
    <ellipse cx="1605" cy="843" rx="13.500" ry="17" /><ellipse cx="1629" cy="819" rx="12.500" ry="17.500" /><ellipse cx="1660" cy="820" rx="13.500" ry="17" transform="rotate(8 1660 820)" /><ellipse cx="1679" cy="850" rx="13.500" ry="17" />
    <path d="M1641 845c14 0 18 13 26 20s18 14 18 27-9 17-19 17-16-3-25-3-16 3-27 3-16-9-16-19 9-17 18-25 11-20 25-20z" />
    <text x="1610" y="899" font-size="50" font-weight="bold" stroke="#b4b4b4" stroke-width="2" class="font-['Liberation_Sans',sans-serif]">du</text>
    <text x="1695" y="902" font-size="59" font-weight="900" class="font-['Noto_Sans_CJK_SC',sans-serif]">经验</text>
    <text x="1478" y="952" font-size="40" class="font-['Open_Sans',sans-serif]">jingyan.baidu.com</text>
  </svg>

  <script>
    const data = [
      ['年份', '2012', '2013', '2014', '2015', '2016', '2020'],
      ['中国文化产业增加值（万亿元）', '1.8', '2.1', '2.4', '2.7', '3.1', '5.5'],
      ['占GDP比重（%）', '0.035', '0.036', '0.0368', '0.04', '0.041', '0.05']
    ]

    // column and row headers
    let head = '<tr class="h-[23px] bg-[#e6e6e6]"><th class="border-r border-b border-[#999] p-0"><svg class="ml-[15px]" width="15" height="15"><path d="M15 0v15H0z" fill="#b4b4b4"/></svg></th>'
    for (const c of 'ABCDEFGHIJKLMNOPQR') {
      head += `<th class="border-r border-b border-b-[#999] border-r-[#b4b4b4] p-0 font-light">${c}</th>`
    }
    document.getElementById('cols').innerHTML = head + '</tr>'

    let body = ''
    for (let r = 1; r <= 31; r++) {
      body += `<tr class="h-[23px]"><th class="border-r border-b border-r-[#999] border-b-[#b4b4b4] bg-[#e6e6e6] p-0 font-light">${r}</th>`
      for (let c = 0; c < 18; c++) {
        const v = (data[r - 1] || [])[c] || ''
        body += c === 0
          ? `<td class="border-r border-b border-[#d4d4d4] p-0 pl-[3px] text-lg leading-none whitespace-nowrap">${v}</td>`
          : `<td class="border-r border-b border-[#d4d4d4] p-0 pr-[3px] text-right">${v}</td>`
      }
      body += '</tr>'
    }
    document.getElementById('rows').innerHTML = body

    // combo chart
    const base = 673, height = 257
    const xs = [331, 417, 503, 589, 676, 762]
    const bars = data[1].slice(1)
    const rates = [3.5, 3.6, 3.68, 4, 4.1, 5]
    let s = '<rect x="249.5" y="353.5" width="600" height="360" fill="#fff" stroke="#969696" stroke-width="1.5"/>'
    s += '<text x="548" y="389" font-size="23" text-anchor="middle">图表标题</text>'
    for (let i = 0; i <= 10; i++) {
      const y = Math.round(base - height * i / 10)
      s += `<path d="M287 ${y + .5}H805" stroke="#d9d9d9"/><text x="274" y="${y + 5}" text-anchor="end">${i}</text>`
    }
    for (let i = 0; i <= 6; i++) {
      s += `<text x="819" y="${Math.round(base - height * i / 6) + 5}">${i}%</text>`
    }
    xs.forEach((x, i) => {
      const top = Math.round(base - height * bars[i] / 10)
      s += `<rect x="${x - 13}" y="${top}" width="27" height="${base - top}" fill="#4472c4"/>`
      s += `<text x="${x}" y="${top + 22}" text-anchor="middle" fill="#fff">${bars[i]}</text>`
      s += `<text x="${x}" y="697" text-anchor="middle">${data[0][i + 1]}</text>`
    })
    const ys = rates.map(v => Math.round(base - height * v / 6) + 1)
    s += `<polyline points="${xs.map((x, i) => x + ',' + ys[i]).join(' ')}" fill="none" stroke="#ed7d31" stroke-width="4.5" stroke-linecap="round" stroke-linejoin="round"/>`
    xs.forEach((x, i) => {
      const t = ys[i] - 33, b = t + 23
      s += `<rect x="${x - 20}" y="${t}" width="41" height="24" fill="none" stroke="#8c8c8c"/>`
      s += `<text x="${x}" y="${t + 17}" text-anchor="middle" fill="#404040">${rates[i].toFixed(1)}%</text>`
      for (const [cx, cy] of [[x - 20, t], [x + 20, t], [x - 20, b], [x + 20, b]]) {
        s += `<circle cx="${cx}" cy="${cy}" r="3.6" fill="#b3d7f2" stroke="#1e88dc" stroke-width="1.4"/>`
      }
    })
    for (const [cx, cy] of [[250, 354], [550, 354], [850, 354], [250, 534], [850, 534], [250, 714], [550, 714], [850, 714]]) {
      s += `<circle cx="${cx}" cy="${cy}" r="5.8" fill="#fff" stroke="#969696" stroke-width="2.4"/>`
    }
    document.getElementById('chart').innerHTML = s
  </script>
</body>
</html>
